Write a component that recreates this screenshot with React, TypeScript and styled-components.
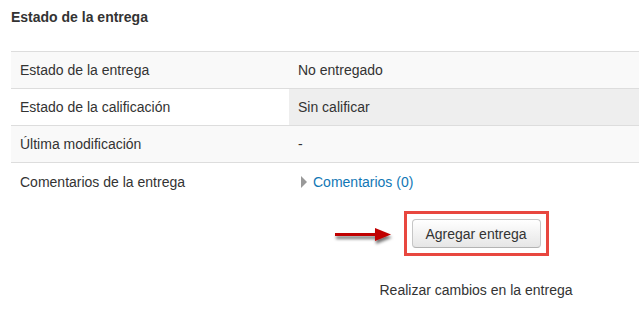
import React from 'react';
import styled, { createGlobalStyle } from 'styled-components';

const GlobalStyle = createGlobalStyle`
  body {
    margin: 0;
    background: #fff;
    font-family: "Liberation Sans", Arial, sans-serif;
    font-size: 14px;
    color: #333;
  }
`;

const Page = styled.div`
  width: 639px;
  height: 314px;
  overflow: hidden;
  padding-left: 11px;
  box-sizing: border-box;
`;

const Heading = styled.h3`
  margin: 0;
  padding-top: 9px;
  font-size: 14px;
  font-weight: bold;
  line-height: 17px;
  color: #333;
`;

const Table = styled.div`
  margin-top: 25px;
  border-top: 1px solid #ddd;
`;

const Row = styled.div<{ $striped?: boolean; $last?: boolean }>`
  display: grid;
  grid-template-columns: 278px 1fr;
  height: 37px;
  background: ${p => (p.$striped ? '#f9f9f9' : '#fff')};
  border-bottom: ${p => (p.$last ? 'none' : '1px solid #ddd')};
  box-sizing: ${p => (p.$last ? 'content-box' : 'border-box')};
`;

const Cell = styled.div<{ $highlight?: boolean }>`
  display: flex;
  align-items: center;
  padding-left: ${p => (p.$highlight ? '9px' : '9px')};
  background: ${p => (p.$highlight ? '#eee' : 'transparent')};
  line-height: 20px;
`;

const Toggle = styled.span`
  display: inline-block;
  width: 0;
  height: 0;
  border-top: 6px solid transparent;
  border-bottom: 6px solid transparent;
  border-left: 6px solid #999;
  margin: 0 6px 0 3px;
`;

const Link = styled.a`
  color: #0f6cbf;
  color: #1177b5;
  text-decoration: none;
`;

const Actions = styled.div`
  margin-left: 302px;
  width: 326px;
  display: flex;
  flex-direction: column;
  align-items: center;
  padding-top: 11px;
`;

const Highlight = styled.div`
  position: relative;
  border: 3px solid #e8473f;
  padding: 5px;
`;

const Button = styled.button`
  display: block;
  width: 129px;
  height: 29px;
  font-family: "Liberation Sans", Arial, sans-serif;
  font-size: 14px;
  color: #333;
  background: linear-gradient(#fff, #e6e6e6);
  border: 1px solid #c6c6c6;
  border-bottom-color: #b3b3b3;
  border-radius: 4px;
  box-shadow: inset 0 1px 0 rgba(255, 255, 255, 0.2);
  padding: 0;
`;

const Arrow = styled.svg`
  position: absolute;
  left: -72px;
  top: 11px;
  overflow: visible;
`;

const Note = styled.div`
  margin-top: 24px;
  line-height: 20px;
`;

export default function App() {
  return (
    <>
      <GlobalStyle />
      <Page>
        <Heading>Estado de la entrega</Heading>
        <Table>
          <Row $striped>
            <Cell>Estado de la entrega</Cell>
            <Cell>No entregado</Cell>
          </Row>
          <Row>
            <Cell>Estado de la calificación</Cell>
            <Cell $highlight>Sin calificar</Cell>
          </Row>
          <Row $striped>
            <Cell>Última modificación</Cell>
            <Cell>-</Cell>
          </Row>
          <Row $last>
            <Cell>Comentarios de la entrega</Cell>
            <Cell>
              <Toggle />
              <Link href="#">Comentarios (0)</Link>
            </Cell>
          </Row>
        </Table>
        <Actions>
          <Highlight>
            <Arrow width="60" height="20" viewBox="0 0 60 20">
              <defs>
                <filter id="sh" x="-20%" y="-50%" width="140%" height="200%">
                  <feDropShadow dx="1" dy="3" stdDeviation="1.5" floodColor="#000" floodOpacity="0.55" />
                </filter>
              </defs>
              <g filter="url(#sh)">
                <rect x="0" y="8" width="42" height="3" fill="#c00000" />
                <polygon points="40,3 56,9.5 40,16" fill="#c00000" />
              </g>
            </Arrow>
            <Button>Agregar entrega</Button>
          </Highlight>
          <Note>Realizar cambios en la entrega</Note>
        </Actions>
      </Page>
    </>
  );
}
